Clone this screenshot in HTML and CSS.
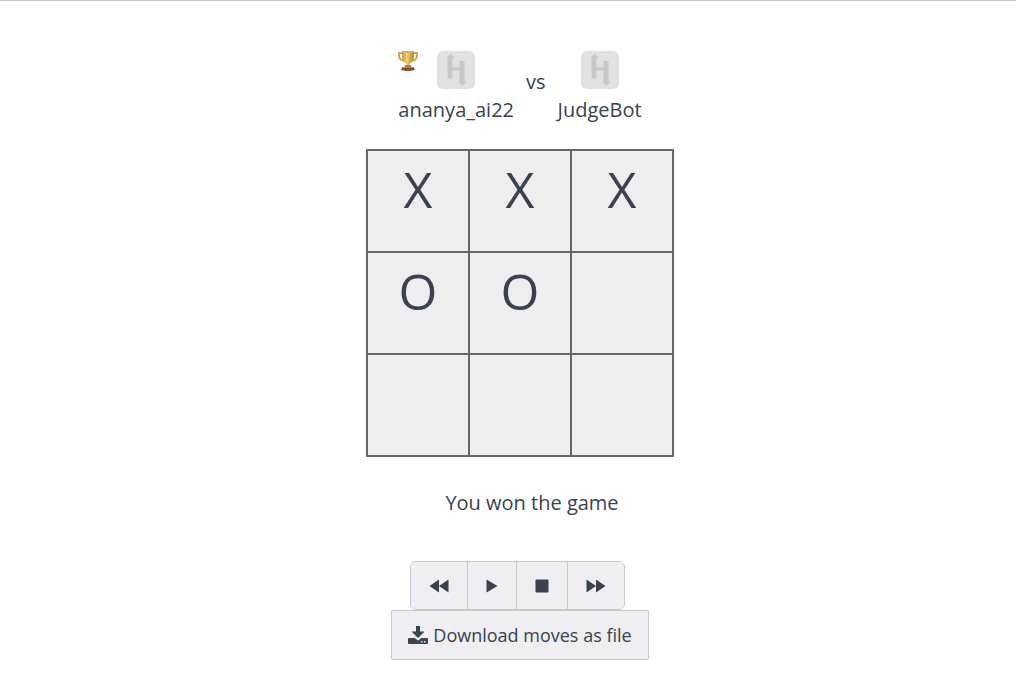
FILE: index.html
```html
<!DOCTYPE html>
<html lang="en">
<head>
<meta charset="utf-8">
<title>Game playback</title>
<link rel="stylesheet" href="styles.css">
</head>
<body>
<svg class="defs" aria-hidden="true">
  <symbol id="avatar" viewBox="0 0 38 38">
    <rect width="38" height="38" rx="6" fill="#e2e2e2"/>
    <path fill="#c8c8c8" d="M13.500 3L18 7h-2.500v9.500h7V10h5v20.500H30L25.500 35 21 30.500h1.500V19.500h-7v8h-5V7H9z"/>
  </symbol>
</svg>
<main class="playback">
  <header class="players">
    <section class="player">
      <svg class="trophy" viewBox="0 0 20 20" role="img" aria-label="Winner">
        <defs>
          <linearGradient id="gold"><stop offset="0" stop-color="#c99335"/><stop offset=".4" stop-color="#f0d080"/><stop offset=".65" stop-color="#deb04d"/><stop offset="1" stop-color="#bd822c"/></linearGradient>
        </defs>
        <path d="M5 2H1v3q0 4 6 5M15 2h4v3q0 4-6 5" fill="none" stroke="#cfa55a" stroke-width="2"/>
        <path d="M4 0h12v5q0 5-4 7.500l-.5 1V16h-3v-2.500l-.5-1Q4 10 4 5z" fill="url(#gold)"/>
        <path d="M4 0h12v1.500H4z" fill="#d3ac5c"/>
        <path d="M7.500 14h5l1 2h-7z" fill="#b9752f"/>
        <path d="M4.500 16h11l1.500 3q-7 1.800-14 0z" fill="#8d4a2e"/>
        <path d="M5 16h10l.5 1h-11z" fill="#c27747"/>
      </svg>
      <svg class="avatar" aria-hidden="true"><use href="#avatar"/></svg>
      <span class="name">ananya_ai22</span>
    </section>
    <span class="versus">vs</span>
    <section class="player">
      <svg class="avatar" aria-hidden="true"><use href="#avatar"/></svg>
      <span class="name">JudgeBot</span>
    </section>
  </header>
  <table class="board">
    <tbody>
      <tr><td>X</td><td>X</td><td>X</td></tr>
      <tr><td>O</td><td>O</td><td></td></tr>
      <tr><td></td><td></td><td></td></tr>
    </tbody>
  </table>
  <p class="result">You won the game</p>
  <div class="controls">
    <button class="control first" type="button" aria-label="Rewind"><svg class="glyph" viewBox="0 0 20 14"><path d="M10 .5v13L.5 7zM19.500 .5v13L10 7z"/></svg></button>
    <button class="control" type="button" aria-label="Play"><svg class="glyph" viewBox="0 0 20 14"><path d="M4.500 .5L15.500 7l-11 6.500z"/></svg></button>
    <button class="control medium" type="button" aria-label="Stop"><svg class="glyph" viewBox="0 0 20 14"><rect x="3.500" y=".5" width="13" height="13" rx="1"/></svg></button>
    <button class="control wide" type="button" aria-label="Fast forward"><svg class="glyph" viewBox="0 0 20 14"><path d="M.5 .5v13L10 7zM10 .5v13L19.500 7z"/></svg></button>
  </div>
  <button class="download" type="button">
    <svg class="download-icon" viewBox="0 0 20 18" aria-hidden="true"><path d="M8 0h4v5.500h4.500L10 12 3.500 5.500H8zM1 12h5.500l3.500 2.500 3.500-2.500H19q1 0 1 1v4q0 1-1 1H1q-1 0-1-1v-4q0-1 1-1zM13 15v1.500h1.500V15zm3 0v1.500h1.500V15z" fill-rule="evenodd"/></svg>
    Download moves as file
  </button>
</main>
</body>
</html>
```
FILE: styles.css
```css
* {
  box-sizing: border-box;
}

body {
  margin: 0;
  border-top: 1px solid #c2c7d0;
  background: #fff;
  color: #39424e;
  font: 20px/28px "Open Sans", "Noto Sans", sans-serif;
}

.defs {
  position: absolute;
  width: 0;
  height: 0;
}

.playback {
  display: flex;
  flex-direction: column;
  align-items: center;
  padding: 50px 0 24px 24px;
}

.players {
  display: flex;
  gap: 12px;
}

.player {
  display: grid;
  grid-template-columns: 1fr auto 1fr;
  row-gap: 7px;
}

.trophy {
  grid-area: 1 / 1;
  width: 20px;
  height: 20px;
}

.avatar {
  grid-area: 1 / 2;
  width: 38px;
  height: 38px;
}

.name {
  grid-area: 2 / 1 / 3 / 4;
}

.versus {
  padding-top: 17px;
}

.board {
  margin: 25px 0 0;
  border-collapse: collapse;
}

.board td {
  width: 102px;
  height: 102px;
  padding: 0 0 24px;
  border: 2px solid #666;
  background: #eee;
  font-size: 50px;
  line-height: 76px;
  text-align: center;
}

.result {
  margin: 32px 0 44px 24px;
}

.controls {
  display: flex;
  margin-right: 6px;
  border: 1px solid #c2c7d0;
  border-radius: 6px;
  overflow: hidden;
}

.control {
  display: flex;
  align-items: center;
  justify-content: center;
  width: 49px;
  height: 47px;
  padding: 0;
  border: 0;
  background: #eeeef3;
  color: inherit;
}

.control + .control {
  border-left: 1px solid #c2c7d0;
}

.control.first {
  width: 56px;
}

.control.medium {
  width: 51px;
}

.control.wide {
  width: 57px;
}

.glyph {
  width: 20px;
  height: 14px;
  fill: currentColor;
}

.download {
  display: flex;
  align-items: center;
  gap: 5px;
  height: 50px;
  padding: 0 16px;
  border: 1px solid #c2c7d0;
  border-radius: 2px;
  background: #eeeef3;
  color: inherit;
  font: 18px/28px "Open Sans", "Noto Sans", sans-serif;
}

.download-icon {
  width: 20px;
  height: 18px;
  fill: currentColor;
}
```
